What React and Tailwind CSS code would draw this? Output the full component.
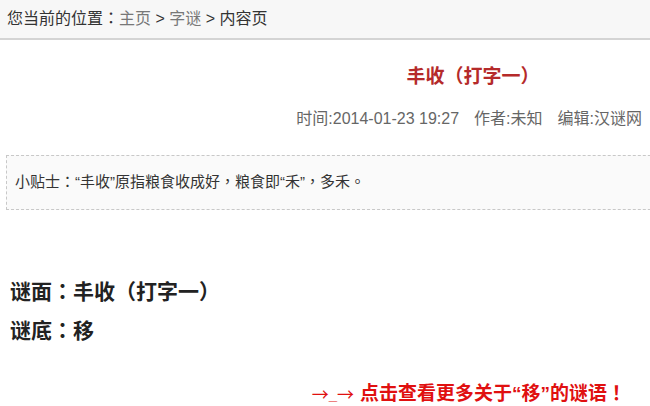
export default function App() {
  return (
    <div className="w-[650px] h-[406px] overflow-hidden bg-white text-[#333]" style={{ fontFamily: '"Liberation Sans", "Noto Sans CJK TC", sans-serif' }}>
      <div className="h-[40px] bg-[#f7f7f7] border-b-2 border-[#d4d4d4] pl-[7px] flex items-center text-[16px] whitespace-pre">
        <span className="text-[#333]">您当前的位置：</span>
        <a className="text-[#777]">主页</a>
        <span className="text-[#333]"> &gt; </span>
        <a className="text-[#777]">字谜</a>
        <span className="text-[#333]"> &gt; </span>
        <span className="text-[#333]">内容页</span>
      </div>

      <div className="pl-[6px]">
        <h1 className="mt-[23px] text-[19px] font-bold text-[#b52a2a] text-center pl-[290px] leading-[28px]">丰收（打字一）</h1>
        <div className="mt-[17px] flex justify-end gap-[15px] pr-[8px] text-[16px] text-[#666] leading-[22px]">
          <span>时间:2014-01-23 19:27</span>
          <span>作者:未知</span>
          <span>编辑:汉谜网</span>
        </div>

        <div className="mt-[25px] w-[700px] h-[55px] border border-dashed border-[#c8c8c8] bg-[#fafafa] flex items-center pl-[8px] text-[15px] text-[#333]">
          小贴士：“丰收”原指粮食收成好，粮食即“禾”，多禾。
        </div>

        <div className="mt-[62px] pl-[4px] text-[21px] font-bold text-[#222] leading-[39px]">
          <p>谜面：丰收（打字一）</p>
          <p>谜底：移</p>
        </div>

        <div className="mt-[31px] flex justify-end items-center pr-[24px] text-[19px] font-bold text-[#e01010] leading-[26px]">
          <a className="flex items-center">
            <span className="font-normal font-['Noto_Sans_CJK_SC'] text-[17px]">→</span>
            <span className="text-[15px] leading-[15px]">_</span>
            <span className="font-normal font-['Noto_Sans_CJK_SC'] text-[17px]">→</span>
            <span className="ml-[6px]">点击查看更多关于“移”的谜语！</span>
          </a>
        </div>
      </div>
    </div>
  );
}
